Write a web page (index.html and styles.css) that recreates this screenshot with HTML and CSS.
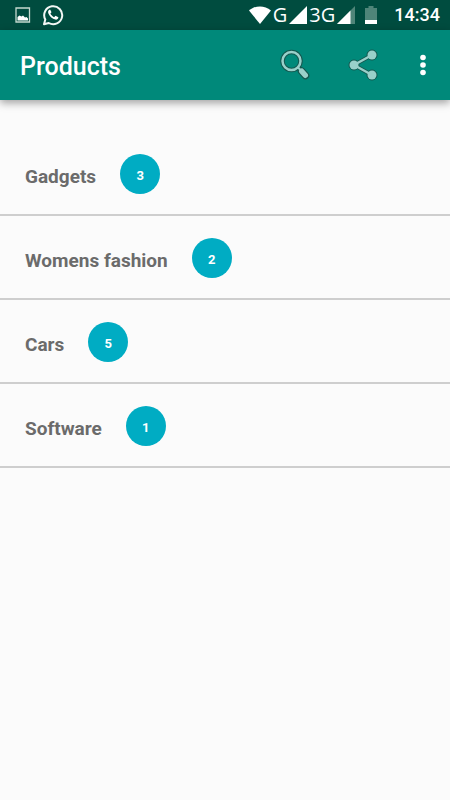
FILE: index.html
```html
<!DOCTYPE html>
<html lang="en">
<head>
<meta charset="utf-8">
<meta name="viewport" content="width=device-width, initial-scale=1">
<title>Products</title>
<link rel="stylesheet" href="styles.css">
</head>
<body>
<div class="status-bar">
  <div class="notifications">
    <svg width="16" height="16" viewBox="0 0 16 16" aria-hidden="true"><path d="M1 1h13.500v14H1z" fill="none" stroke="#c5d9cf" stroke-width="1.300"/><path d="M2.500 13.500v-3.500l2-1.500 2 1 1.500-1 2 2 1.500-.5 1.500 1.500v2z" fill="#fff"/></svg>
    <svg width="22" height="22" viewBox="0 0 22 22" aria-hidden="true"><path d="M2 20.300l1.300-4.800A9 9 0 1 1 6.700 19z" fill="none" stroke="#f2f7f5" stroke-width="2" stroke-linejoin="round"/><path d="M7.300 5.700c-1.300.8-1.500 2.500-.8 4 1.400 3.100 3.700 5.100 6.900 5.900 1.500.3 2.900-.7 3-2.300l-2.900-1.600-1.400 1.500c-1.700-.8-2.900-2-3.700-3.600l1.100-1.300-1.200-2.600z" fill="#fff"/></svg>
  </div>
  <div class="indicators">
    <svg width="22" height="18" viewBox="0 0 22 18" aria-hidden="true"><path d="M0 4.500C6.500-1 15.500-1 22 4.500L11 18z" fill="#fff"/></svg>
    <span class="network">G</span>
    <svg width="18" height="18" viewBox="0 0 18 18" aria-hidden="true"><path d="M18 0v18H0z" fill="#fff"/></svg>
    <span class="network">3G</span>
    <svg width="18" height="18" viewBox="0 0 18 18" aria-hidden="true"><path d="M18 0v18H0z" fill="#4f8579"/><path d="M13.500 4.500V18H0z" fill="#fff"/></svg>
    <svg class="battery" width="12" height="18" viewBox="0 0 12 18" aria-hidden="true"><path d="M0 2h3.500V0h5v2H12v16H0z" fill="#4f8579"/><path d="M0 14h12v4H0z" fill="#fff"/></svg>
    <time class="clock">14:34</time>
  </div>
</div>
<header class="app-bar">
  <h1 class="title">Products</h1>
  <div class="actions">
    <button class="action" type="button" aria-label="Search">
      <svg width="32" height="32" viewBox="0 0 32 32" aria-hidden="true"><g fill="none" stroke="#14574f"><circle cx="11.500" cy="12" r="9" stroke-width="4.500"/><path d="M18 18l4 4" stroke-width="4"/><path d="M21.500 22l4 4.500" stroke-width="7.600" stroke-linecap="round"/></g><g fill="none" stroke="#99d0ca"><circle cx="11.500" cy="12" r="9" stroke-width="2.500"/><path d="M17.800 18.300l4 4" stroke-width="2"/><path d="M21.700 22.200l3.600 4.100" stroke-width="5.400" stroke-linecap="round"/></g></svg>
    </button>
    <button class="action action-share" type="button" aria-label="Share">
      <svg width="32" height="32" viewBox="0 0 32 32" aria-hidden="true"><g fill="#14574f" stroke="#14574f"><path d="M25 6L7 16l18 10" fill="none" stroke-width="4"/><circle cx="25" cy="6" r="5"/><circle cx="7" cy="16" r="5"/><circle cx="25" cy="26" r="5"/></g><g fill="#99d0ca"><path d="M25 6L7 16l18 10" fill="none" stroke="#99d0ca" stroke-width="2.400"/><circle cx="25" cy="6" r="4.500"/><circle cx="7" cy="16" r="4.500"/><circle cx="25" cy="26" r="4.500"/></g></svg>
    </button>
    <button class="action" type="button" aria-label="More options">
      <svg width="6" height="22" viewBox="0 0 6 22" fill="#fff" aria-hidden="true"><circle cx="3" cy="3.500" r="2.800"/><circle cx="3" cy="11" r="2.800"/><circle cx="3" cy="18.500" r="2.800"/></svg>
    </button>
  </div>
</header>
<main>
  <ul class="categories">
    <li class="category"><span class="name">Gadgets</span><span class="count">3</span></li>
    <li class="category"><span class="name">Womens fashion</span><span class="count">2</span></li>
    <li class="category"><span class="name">Cars</span><span class="count">5</span></li>
    <li class="category"><span class="name">Software</span><span class="count">1</span></li>
  </ul>
</main>
</body>
</html>
```
FILE: styles.css
```css
* {
  box-sizing: border-box;
}

body {
  margin: 0;
  min-height: 100vh;
  background: #fbfbfb;
  font-family: Roboto, "Liberation Sans", sans-serif;
}

svg {
  display: block;
  flex: none;
}

.status-bar {
  display: flex;
  align-items: center;
  justify-content: space-between;
  height: 30px;
  padding: 0 10px 0 15px;
  background: #004c3f;
  color: #fff;
}

.notifications {
  display: flex;
  align-items: center;
  gap: 11px;
}

.indicators {
  display: flex;
  align-items: center;
  gap: 2px;
}

.network {
  font-family: "Open Sans", "Noto Sans", sans-serif;
  font-size: 20px;
  line-height: 30px;
}

.battery {
  margin: 0 15px 0 8px;
}

.clock {
  font-size: 18px;
  font-weight: 500;
  line-height: 32px;
}

.app-bar {
  display: flex;
  align-items: center;
  justify-content: space-between;
  height: 70px;
  padding: 0 24px 0 20px;
  background: #00897a;
  box-shadow: 0 3px 8px rgba(0, 0, 0, 0.36);
}

.title {
  margin: 0;
  padding-top: 4px;
  color: #fff;
  font-size: 25px;
  font-weight: 500;
  line-height: 32px;
}

.actions {
  display: flex;
  align-items: center;
}

.action {
  padding: 0;
  border: 0;
  background: none;
}

.action-share {
  margin: 0 41px 0 35px;
}

.categories {
  margin: 0;
  padding: 32px 0 0;
  list-style: none;
}

.category {
  display: flex;
  align-items: flex-start;
  gap: 24px;
  height: 84px;
  padding: 22px 25px 0;
  border-bottom: 2px solid #cecece;
}

.name {
  padding-top: 11px;
  color: #6b6b6b;
  font-size: 19px;
  font-weight: 700;
  line-height: 24px;
}

.count {
  flex: none;
  width: 40px;
  height: 40px;
  border-radius: 50%;
  background: #00acc3;
  color: #fff;
  font-size: 13px;
  font-weight: 700;
  line-height: 43px;
  text-align: center;
}
```
